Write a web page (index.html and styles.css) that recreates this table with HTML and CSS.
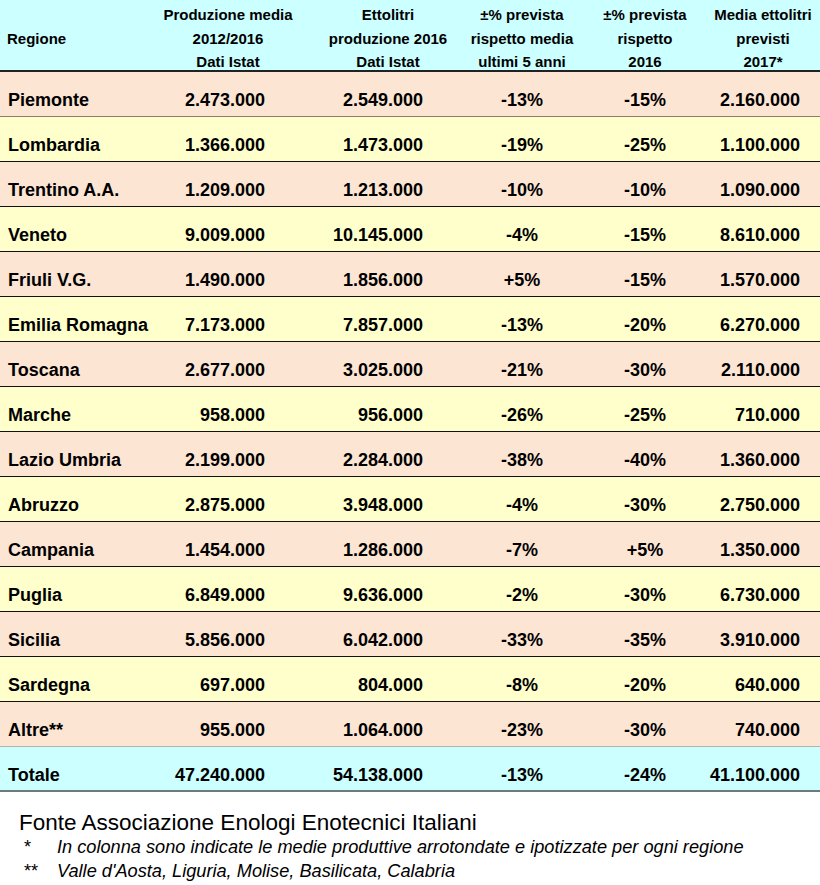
FILE: index.html
```html
<!DOCTYPE html>
<html lang="it">
<head>
<meta charset="utf-8">
<title>Produzione vino 2017</title>
<link rel="stylesheet" href="styles.css">
</head>
<body>
<div class="table">
  <div class="row head">
    <div class="c c1"><span>Regione</span></div>
    <div class="c cc"><span>Produzione media<br>2012/2016<br>Dati Istat</span></div>
    <div class="c cc"><span>Ettolitri<br>produzione 2016<br>Dati Istat</span></div>
    <div class="c cc"><span>±% prevista<br>rispetto media<br>ultimi 5 anni</span></div>
    <div class="c cc"><span>±% prevista<br>rispetto<br>2016</span></div>
    <div class="c cc"><span>Media ettolitri<br>previsti<br>2017*</span></div>
  </div>
  <div class="row peach soft"><div class="c c1">Piemonte</div><div class="c c2">2.473.000</div><div class="c c3">2.549.000</div><div class="c cc">-13%</div><div class="c cc">-15%</div><div class="c c6">2.160.000</div></div>
  <div class="row yellow"><div class="c c1">Lombardia</div><div class="c c2">1.366.000</div><div class="c c3">1.473.000</div><div class="c cc">-19%</div><div class="c cc">-25%</div><div class="c c6">1.100.000</div></div>
  <div class="row peach"><div class="c c1">Trentino A.A.</div><div class="c c2">1.209.000</div><div class="c c3">1.213.000</div><div class="c cc">-10%</div><div class="c cc">-10%</div><div class="c c6">1.090.000</div></div>
  <div class="row yellow"><div class="c c1">Veneto</div><div class="c c2">9.009.000</div><div class="c c3">10.145.000</div><div class="c cc">-4%</div><div class="c cc">-15%</div><div class="c c6">8.610.000</div></div>
  <div class="row peach"><div class="c c1">Friuli V.G.</div><div class="c c2">1.490.000</div><div class="c c3">1.856.000</div><div class="c cc">+5%</div><div class="c cc">-15%</div><div class="c c6">1.570.000</div></div>
  <div class="row yellow"><div class="c c1">Emilia Romagna</div><div class="c c2">7.173.000</div><div class="c c3">7.857.000</div><div class="c cc">-13%</div><div class="c cc">-20%</div><div class="c c6">6.270.000</div></div>
  <div class="row peach"><div class="c c1">Toscana</div><div class="c c2">2.677.000</div><div class="c c3">3.025.000</div><div class="c cc">-21%</div><div class="c cc">-30%</div><div class="c c6">2.110.000</div></div>
  <div class="row yellow"><div class="c c1">Marche</div><div class="c c2">958.000</div><div class="c c3">956.000</div><div class="c cc">-26%</div><div class="c cc">-25%</div><div class="c c6">710.000</div></div>
  <div class="row peach"><div class="c c1">Lazio Umbria</div><div class="c c2">2.199.000</div><div class="c c3">2.284.000</div><div class="c cc">-38%</div><div class="c cc">-40%</div><div class="c c6">1.360.000</div></div>
  <div class="row yellow"><div class="c c1">Abruzzo</div><div class="c c2">2.875.000</div><div class="c c3">3.948.000</div><div class="c cc">-4%</div><div class="c cc">-30%</div><div class="c c6">2.750.000</div></div>
  <div class="row peach"><div class="c c1">Campania</div><div class="c c2">1.454.000</div><div class="c c3">1.286.000</div><div class="c cc">-7%</div><div class="c cc">+5%</div><div class="c c6">1.350.000</div></div>
  <div class="row yellow"><div class="c c1">Puglia</div><div class="c c2">6.849.000</div><div class="c c3">9.636.000</div><div class="c cc">-2%</div><div class="c cc">-30%</div><div class="c c6">6.730.000</div></div>
  <div class="row peach"><div class="c c1">Sicilia</div><div class="c c2">5.856.000</div><div class="c c3">6.042.000</div><div class="c cc">-33%</div><div class="c cc">-35%</div><div class="c c6">3.910.000</div></div>
  <div class="row yellow"><div class="c c1">Sardegna</div><div class="c c2">697.000</div><div class="c c3">804.000</div><div class="c cc">-8%</div><div class="c cc">-20%</div><div class="c c6">640.000</div></div>
  <div class="row peach last"><div class="c c1">Altre**</div><div class="c c2">955.000</div><div class="c c3">1.064.000</div><div class="c cc">-23%</div><div class="c cc">-30%</div><div class="c c6">740.000</div></div>
  <div class="row total"><div class="c c1">Totale</div><div class="c c2">47.240.000</div><div class="c c3">54.138.000</div><div class="c cc">-13%</div><div class="c cc">-24%</div><div class="c c6">41.100.000</div></div>
</div>
<div class="notes">
  <p class="source">Fonte Associazione Enologi Enotecnici Italiani</p>
  <p class="note"><span class="mark">*</span><span>In colonna sono indicate le medie produttive arrotondate e ipotizzate per ogni regione</span></p>
  <p class="note"><span class="mark">**</span><span>Valle d'Aosta, Liguria, Molise, Basilicata, Calabria</span></p>
</div>
</body>
</html>
```
FILE: styles.css
```css
html, body {
  margin: 0;
  padding: 0;
  background: #ffffff;
}
body {
  width: 820px;
  font-family: "Liberation Sans", Arial, sans-serif;
  color: #000;
}
.table {
  display: flex;
  flex-direction: column;
}
.row {
  display: grid;
  grid-template-columns: 160px 136px 184px 84px 162px 74px 20px;
  height: 45px;
  box-sizing: border-box;
  border-bottom: 1px solid #111;
  font-weight: bold;
  font-size: 18px;
}
.row.head {
  height: 72px;
  background: #ccffff;
  border-bottom: 2px solid #222;
  font-size: 15px;
  line-height: 23.5px;
}
.peach { background: #fde5d4; }
.yellow { background: #ffffcc; }
.total { background: #ccffff; border-bottom: 2px solid #6b7b7b; }
.last { border-bottom: 1px solid #b9b0a8; }
.soft { border-bottom: 1px solid #8a7d70; }
.c {
  display: flex;
  align-items: center;
  white-space: nowrap;
  padding-top: 13px;
  box-sizing: border-box;
}
.head .c {
  padding-top: 3px;
}
.c1 { padding-left: 8px; }
.head .c1 { padding-left: 7px; }
.c2 { justify-content: flex-end; padding-right: 31px; }
.c3 { justify-content: flex-end; padding-right: 57px; }
.cc { justify-content: center; text-align: center; }
.c6 { justify-content: flex-end; }
.notes {
  padding: 18px 0 0 0;
}
.notes p {
  margin: 0;
}
.source {
  font-size: 22.5px;
  padding-left: 19px;
  line-height: 25px;
}
.note {
  display: flex;
  font-style: italic;
  font-size: 18.2px;
  line-height: 24px;
}
.mark {
  width: 57px;
  box-sizing: border-box;
  padding-left: 24px;
  font-style: normal;
}
```
